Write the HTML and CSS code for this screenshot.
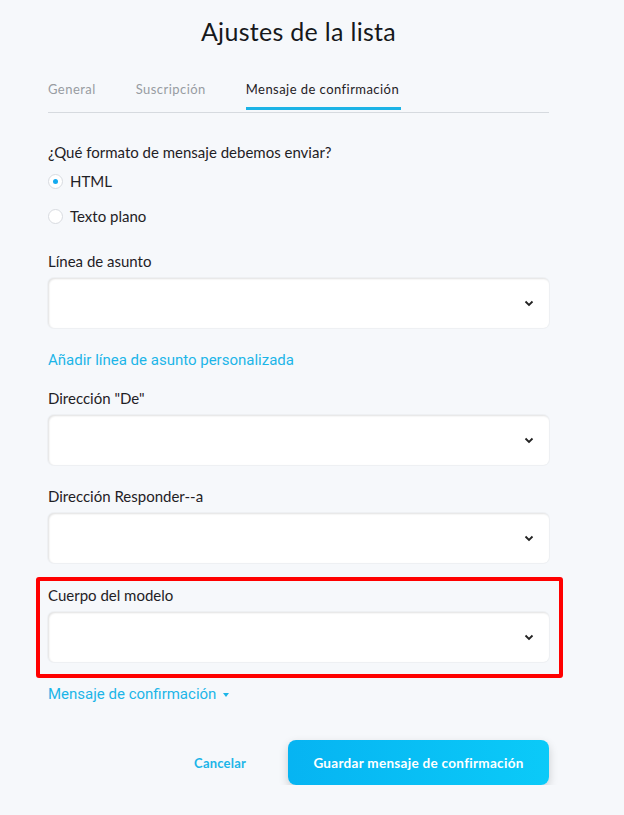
FILE: index.html
```html
<!DOCTYPE html>
<html lang="es">
<head>
<meta charset="utf-8">
<link rel="stylesheet" href="styles.css">
</head>
<body>
<div class="page">
  <h1 class="title">Ajustes de la lista</h1>
  <nav class="tabs">
    <span class="tab">General</span>
    <span class="tab">Suscripción</span>
    <span class="tab active">Mensaje de confirmación</span>
  </nav>

  <div class="question">¿Qué formato de mensaje debemos enviar?</div>
  <div class="radios">
    <label class="radio"><span class="dot checked"></span>HTML</label>
    <label class="radio"><span class="dot"></span>Texto plano</label>
  </div>

  <div class="field first">
    <div class="label">Línea de asunto</div>
    <div class="select"><svg class="chev" width="10" height="7" viewBox="0 0 10 7"><path d="M1.5 1.5 L5 5 L8.5 1.5" fill="none" stroke="#222" stroke-width="1.8"/></svg></div>
  </div>
  <a class="link link-subject">Añadir línea de asunto personalizada</a>

  <div class="field">
    <div class="label">Dirección "De"</div>
    <div class="select"><svg class="chev" width="10" height="7" viewBox="0 0 10 7"><path d="M1.5 1.5 L5 5 L8.5 1.5" fill="none" stroke="#222" stroke-width="1.8"/></svg></div>
  </div>

  <div class="field">
    <div class="label">Dirección Responder--a</div>
    <div class="select"><svg class="chev" width="10" height="7" viewBox="0 0 10 7"><path d="M1.5 1.5 L5 5 L8.5 1.5" fill="none" stroke="#222" stroke-width="1.8"/></svg></div>
  </div>

  <div class="highlight">
    <div class="label">Cuerpo del modelo</div>
    <div class="select"><svg class="chev" width="10" height="7" viewBox="0 0 10 7"><path d="M1.5 1.5 L5 5 L8.5 1.5" fill="none" stroke="#222" stroke-width="1.8"/></svg></div>
  </div>
  <a class="link link-msg">Mensaje de confirmación <span class="caret"></span></a>

  <div class="actions">
    <button class="cancel">Cancelar</button>
    <button class="save">Guardar mensaje de confirmación</button>
  </div>
</div>
</body>
</html>
```

FILE: styles.css
```css
html, body {
  margin: 0;
  padding: 0;
  background: #f6f8fb;
}
body {
  font-family: "Source Sans Pro", Lato, "Noto Sans", sans-serif;
  color: #1f2125;
}
.page {
  width: 501px;
  margin-left: 48px;
  padding-top: 14px;
}
.title {
  margin: 0;
  font-weight: 400;
  font-size: 25px;
  line-height: 34px;
  text-align: center;
  color: #16181b;
  letter-spacing: 0.3px;
}
.tabs {
  display: flex;
  margin-top: 33px;
  border-bottom: 1px solid #d6dadf;
  height: 32px;
  box-sizing: border-box;
}
.tab {
  font-size: 13px;
  line-height: 17px;
  color: #989ca2;
  margin-right: 40px;
  letter-spacing: 0.45px;
}
.tab.active {
  color: #1f2125;
  border-bottom: 3px solid #1bb3e6;
  height: 29px;
  box-sizing: border-box;
  margin-bottom: -1px;
  padding-right: 2px;
}
.question {
  margin-top: 30px;
  font-size: 15px;
  line-height: 18px;
}
.radios {
  margin-top: 11px;
  display: flex;
  flex-direction: column;
  gap: 17px;
}
.radio {
  display: flex;
  align-items: center;
  font-size: 15px;
  line-height: 18px;
}
.dot {
  width: 15px;
  height: 15px;
  border-radius: 50%;
  background: #fff;
  border: 1px solid #d8dbe0;
  margin-right: 7px;
  box-sizing: border-box;
  display: flex;
  align-items: center;
  justify-content: center;
}
.dot.checked::after {
  content: "";
  width: 5px;
  height: 5px;
  border-radius: 50%;
  background: #13aaf0;
}
.field {
  margin-top: 22px;
}
.field.first {
  margin-top: 27px;
}
.label {
  font-size: 15px;
  line-height: 18px;
}
.select {
  margin-top: 8px;
  height: 50px;
  background: #fff;
  border-radius: 6px;
  box-shadow: inset 1px 1px 2px rgba(0,0,0,0.12), 0 0 0 1px #eef0f3;
  display: flex;
  align-items: center;
  justify-content: flex-end;
  padding-right: 15px;
}
.chev {
  display: block;
}
.link {
  display: block;
  color: #1cb5e8;
  font-family: Roboto, sans-serif;
  font-size: 15px;
  line-height: 18px;
}
.link-subject {
  margin-top: 23px;
  margin-bottom: -2px;
}
.highlight {
  margin-top: 14px;
  margin-left: -12px;
  margin-right: -14px;
  border: 4px solid #ff0000;
  border-radius: 3px;
  padding: 5px 10px 12px 8px;
}
.link-msg {
  margin-top: 7px;
}
.caret {
  display: inline-block;
  width: 0;
  height: 0;
  border-left: 3px solid transparent;
  border-right: 3px solid transparent;
  border-top: 4px solid #1cb5e8;
  vertical-align: middle;
  margin-left: 3px;
}
.actions {
  display: flex;
  align-items: center;
  margin-top: 37px;
  justify-content: flex-end;
}
.cancel {
  background: none;
  border: none;
  font-family: Lato, sans-serif;
  font-weight: 700;
  font-size: 13px;
  letter-spacing: 0.2px;
  color: #1cb5e8;
  padding: 0;
  margin-right: 42px;
}
.save {
  width: 261px;
  height: 45px;
  border: none;
  border-radius: 8px;
  background: linear-gradient(90deg, #06b4f2, #0bcaf8);
  box-shadow: 0 4px 10px rgba(0,0,0,0.18);
  color: #fff;
  font-family: Lato, sans-serif;
  font-weight: 700;
  font-size: 13.5px;
  letter-spacing: 0.3px;
}
```
